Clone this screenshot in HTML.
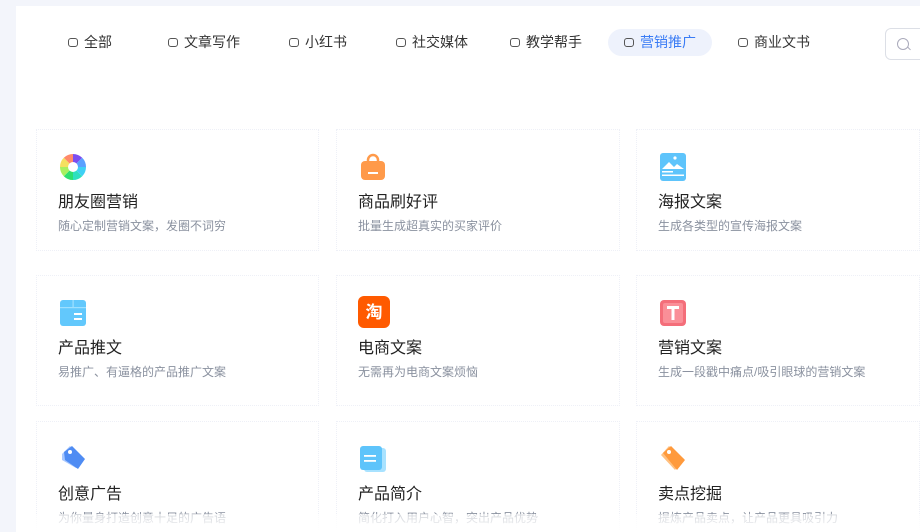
<!DOCTYPE html>
<html><head><meta charset="utf-8"><style>
*{margin:0;padding:0;box-sizing:border-box}
body{width:920px;height:532px;overflow:hidden;background:#f3f5fb;font-family:"Liberation Sans","Noto Sans CJK SC",sans-serif;position:relative}
.panel{position:absolute;left:16px;top:6px;width:904px;height:526px;background:#fff}
.tab{position:absolute;top:33px;font-size:14px;color:#333;display:flex;align-items:center;height:18px}
.tab i{display:inline-block;width:10px;height:9px;border:1.5px solid #555;border-radius:3px;margin-right:6px}
.tab.act{color:#3a7cf5}
.pill{position:absolute;left:608px;top:29px;width:104px;height:27px;border-radius:14px;background:#eef2fc}
.search{position:absolute;left:885px;top:28px;width:60px;height:32px;border:1px solid #dcdfe6;border-radius:6px}
.search:before{content:"";position:absolute;left:11px;top:9px;width:10px;height:10px;border:1.3px solid #aab;border-radius:50%}
.search:after{content:"";position:absolute;left:21px;top:19px;width:4px;height:1.3px;background:#aab;transform:rotate(45deg)}
.card{position:absolute;width:284px;border:1px dotted #eef0f7;background:#fff}
.ic{position:absolute;left:21px;top:22px;width:30px;height:30px}
.t{position:absolute;left:21px;top:58px;font-size:16px;color:#222}
.d{position:absolute;left:21px;top:87px;font-size:12px;color:#8a919f;white-space:nowrap}
</style></head><body>
<div class="panel"></div>
<div class="pill"></div>
<div class="tab" style="left:68px"><i></i>全部</div>
<div class="tab" style="left:168px"><i></i>文章写作</div>
<div class="tab" style="left:289px"><i></i>小红书</div>
<div class="tab" style="left:396px"><i></i>社交媒体</div>
<div class="tab" style="left:510px"><i></i>教学帮手</div>
<div class="tab act" style="left:624px"><i></i>营销推广</div>
<div class="tab" style="left:738px"><i></i>商业文书</div>
<div class="search"></div>

<div class="card" style="left:36px;top:129px;height:122px;width:283px">
<svg class="ic" viewBox="0 0 30 30"><g transform="translate(15,15)">
<path d="M0 0L0-13A13 13 0 0 1 9.2-9.2Z" fill="#7b4df0"/><path d="M0 0L9.2-9.2A13 13 0 0 1 13 0Z" fill="#5aa0ff"/><path d="M0 0L13 0A13 13 0 0 1 9.2 9.2Z" fill="#3fd0f5"/><path d="M0 0L9.2 9.2A13 13 0 0 1 0 13Z" fill="#2ee0c0"/><path d="M0 0L0 13A13 13 0 0 1-9.2 9.2Z" fill="#2ee070"/><path d="M0 0L-9.2 9.2A13 13 0 0 1-13 0Z" fill="#a8f060"/><path d="M0 0L-13 0A13 13 0 0 1-9.2-9.2Z" fill="#f5e060"/><path d="M0 0L-9.2-9.2A13 13 0 0 1 0-13Z" fill="#ff8a6a"/><circle r="5" fill="#fff"/></g></svg>
<div class="t">朋友圈营销</div><div class="d">随心定制营销文案，发圈不词穷</div></div>
<div class="card" style="left:336px;top:129px;height:122px">
<svg class="ic" viewBox="0 0 30 30"><path d="M10 10V8a5 5 0 0 1 10 0v2" stroke="#ff9a4a" stroke-width="2.5" fill="none"/><rect x="3" y="9" width="24" height="19" rx="4" fill="#ff9a4a"/><rect x="10" y="20" width="10" height="2" fill="#fff"/></svg>
<div class="t">商品刷好评</div><div class="d">批量生成超真实的买家评价</div></div>
<div class="card" style="left:636px;top:129px;height:122px">
<svg class="ic" viewBox="0 0 30 30"><rect x="2" y="1" width="26" height="28" rx="3" fill="#5ec4fb"/><path d="M4 17l7-7 5 5 3-3 7 5z" fill="#fff"/><circle cx="17" cy="6" r="1.6" fill="#fff"/><rect x="4" y="19" width="11" height="1.5" fill="#fff"/><rect x="4" y="22.5" width="22" height="1.5" fill="#fff"/></svg>
<div class="t">海报文案</div><div class="d">生成各类型的宣传海报文案</div></div>

<div class="card" style="left:36px;top:275px;height:131px;width:283px">
<svg class="ic" viewBox="0 0 30 30"><rect x="2" y="2" width="26" height="26" rx="3" fill="#62c8fc"/><rect x="2" y="9" width="26" height="1.2" fill="#9ee0ff"/><rect x="14.5" y="2" width="1.2" height="7" fill="#9ee0ff"/><rect x="16" y="15" width="8" height="2" fill="#fff"/><rect x="16" y="20" width="8" height="2" fill="#fff"/></svg>
<div class="t">产品推文</div><div class="d">易推广、有逼格的产品推广文案</div></div>
<div class="card" style="left:336px;top:275px;height:131px">
<svg class="ic" viewBox="0 0 32 32" style="width:32px;height:32px;top:20px"><rect width="32" height="32" rx="6" fill="#ff5a00"/><text x="16" y="22" text-anchor="middle" font-size="17" font-weight="bold" fill="#fff" font-family="Noto Sans CJK SC,sans-serif">淘</text></svg>
<div class="t">电商文案</div><div class="d">无需再为电商文案烦恼</div></div>
<div class="card" style="left:636px;top:275px;height:131px">
<svg class="ic" viewBox="0 0 30 30"><rect x="2" y="2" width="26" height="26" rx="4" fill="#f46e7a"/><rect x="5" y="5" width="20" height="20" rx="2" fill="#ffb0b6" opacity=".5"/><path d="M9 8h12v3h-4.5v11h-3V11H9z" fill="#fff"/></svg>
<div class="t">营销文案</div><div class="d">生成一段戳中痛点/吸引眼球的营销文案</div></div>

<div class="card" style="left:36px;top:421px;height:111px;width:283px">
<svg class="ic" viewBox="0 0 30 30"><path d="M4 10L12 2l14 14-8 8-14-8z" fill="#a8c8ff"/><path d="M6 8l8-6 13 13-7 10-13-9z" fill="#4f8cf3"/><circle cx="12" cy="8" r="2" fill="#fff"/></svg>
<div class="t">创意广告</div><div class="d">为你量身打造创意十足的广告语</div></div>
<div class="card" style="left:336px;top:421px;height:111px">
<svg class="ic" viewBox="0 0 30 30"><rect x="6" y="4" width="22" height="24" rx="3" fill="#a8e2ff"/><rect x="2" y="2" width="22" height="24" rx="3" fill="#5ec4fb"/><rect x="6" y="11" width="12" height="1.8" fill="#fff"/><rect x="6" y="16" width="12" height="1.8" fill="#fff"/></svg>
<div class="t">产品简介</div><div class="d">简化打入用户心智，突出产品优势</div></div>
<div class="card" style="left:636px;top:421px;height:111px">
<svg class="ic" viewBox="0 0 30 30"><path d="M3 11L11 2l15 13-9 11z" fill="#ffc080"/><path d="M5 9l8-7 14 14-8 10z" fill="#ff9a3c"/><circle cx="11" cy="8" r="2" fill="#fff"/></svg>
<div class="t">卖点挖掘</div><div class="d">提炼产品卖点，让产品更具吸引力</div></div>
<div style="position:absolute;left:16px;top:514px;width:904px;height:18px;background:linear-gradient(rgba(255,255,255,.6),#fff)"></div>
</body></html>
